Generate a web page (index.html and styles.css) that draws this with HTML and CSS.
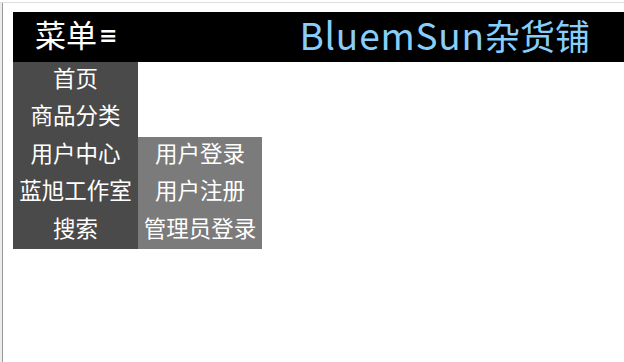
FILE: index.html
```html
<!DOCTYPE html>
<html lang="zh-CN">
<head>
<meta charset="utf-8">
<title>BluemSun杂货铺</title>
<link rel="stylesheet" href="styles.css">
</head>
<body>
<div class="frame">
  <div class="strip"></div>
  <div class="page">
    <header class="topbar">
      <div class="menu-toggle">菜单<span class="burger">≡</span></div>
      <div class="brand"><span class="latin">BluemSun</span>杂货铺</div>
    </header>
    <nav class="nav">
      <ul class="menu">
        <li>首页</li>
        <li>商品分类</li>
        <li>用户中心</li>
        <li>蓝旭工作室</li>
        <li>搜索</li>
      </ul>
      <ul class="submenu">
        <li>用户登录</li>
        <li>用户注册</li>
        <li>管理员登录</li>
      </ul>
    </nav>
  </div>
</div>
</body>
</html>
```
FILE: styles.css
```css
html, body {
  margin: 0;
  padding: 0;
  background: #fff;
  overflow: hidden;
}
body {
  font-family: "Noto Sans CJK SC", "Noto Sans", sans-serif;
  height: 362px;
}
.frame {
  display: flex;
  margin-top: 2px;
  border-top: 1px solid #dedede;
  height: 359px;
}
.strip {
  width: 2px;
  background: #ececec;
  border-right: 1px solid #9a9a9a;
  flex: none;
}
.page {
  flex: 1;
  padding: 9px 0 0 10px;
  min-width: 0;
}
.topbar {
  height: 50px;
  background: #000;
  display: flex;
  align-items: center;
  justify-content: space-between;
  padding: 0 34px 0 22px;
}
.menu-toggle {
  color: #fff;
  font-size: 31px;
  line-height: 1;
  display: flex;
  align-items: center;
  margin-top: -8px;
}
.burger {
  font-family: "DejaVu Sans", sans-serif;
  font-size: 22px;
  font-weight: bold;
  margin-left: 2px;
  margin-top: 5px;
}
.brand {
  color: #87cefa;
  font-size: 35px;
  line-height: 1;
  margin-top: -6px;
}
.latin {
  font-size: 37px;
  letter-spacing: 0.8px;
}
.nav {
  display: flex;
  align-items: flex-start;
}
.menu, .submenu {
  list-style: none;
  margin: 0;
  padding: 0;
}
.menu {
  width: 125px;
  background: #4a4a4a;
}
.submenu {
  width: 124px;
  background: #7b7b7b;
  margin-top: 74.8px;
}
.menu li, .submenu li {
  height: 37.4px;
  line-height: 31px;
  text-align: center;
  color: #fff;
  font-size: 22.5px;
  white-space: nowrap;
}
```
